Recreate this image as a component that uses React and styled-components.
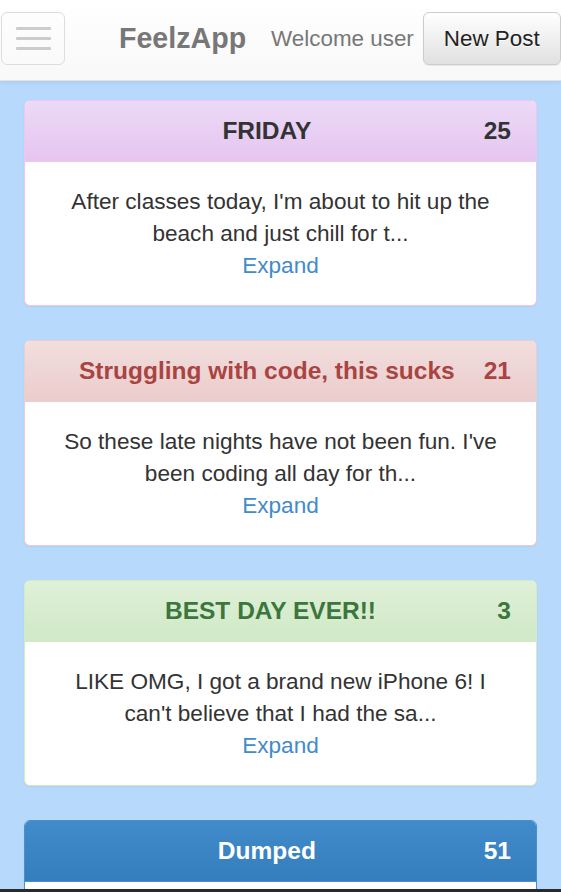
import styled, { createGlobalStyle } from "styled-components";

const GlobalStyle = createGlobalStyle`
  html, body {
    margin: 0;
    padding: 0;
  }
  body {
    font-family: "Liberation Sans", Arial, Helvetica, sans-serif;
    color: #333333;
    background: #b6d9fc;
  }
  * {
    box-sizing: border-box;
  }
`;

const posts = [
  {
    id: 1,
    title: "FRIDAY",
    votes: 25,
    mood: "purple",
    text: "After classes today, I'm about to hit up the beach and just chill for t...",
  },
  {
    id: 2,
    title: "Struggling with code, this sucks",
    votes: 21,
    mood: "danger",
    text: "So these late nights have not been fun. I've been coding all day for th...",
  },
  {
    id: 3,
    title: "BEST DAY EVER!!",
    votes: 3,
    mood: "success",
    text: "LIKE OMG, I got a brand new iPhone 6! I can't believe that I had the sa...",
  },
  {
    id: 4,
    title: "Dumped",
    votes: 51,
    mood: "primary",
    text: "I can't believe she did that to me. We were together for so long and...",
  },
];

const moods = {
  purple: {
    top: "#ebdaf6",
    bottom: "#e6c5f0",
    border: "#efc6f1",
    color: "#333333",
  },
  danger: {
    top: "#f2dede",
    bottom: "#ebcccc",
    border: "#ebccd1",
    color: "#a94442",
  },
  success: {
    top: "#dff0d8",
    bottom: "#d0e9c6",
    border: "#d6e9c6",
    color: "#3c763d",
  },
  primary: {
    top: "#428bca",
    bottom: "#357ebd",
    border: "#4a90cf",
    color: "#ffffff",
  },
};

function Post(props) {
  const { title, votes, mood, text } = props.post;
  const m = moods[mood];
  return (
    <Panel $border={m.border}>
      <PanelHeading $top={m.top} $bottom={m.bottom} $border={m.border}>
        <Title $color={m.color}>{title}</Title>
        <Votes $color={m.color}>{votes}</Votes>
      </PanelHeading>
      <PanelBody>
        <p>{text}</p>
        <Expand href="#">Expand</Expand>
      </PanelBody>
    </Panel>
  );
}

export default function App() {
  return (
    <>
      <GlobalStyle />
      <Screen>
        <Navbar>
          <Toggle aria-label="menu">
            <Bar />
            <Bar />
            <Bar />
          </Toggle>
          <Brand>FeelzApp</Brand>
          <Welcome>Welcome user</Welcome>
          <NewPost>New Post</NewPost>
        </Navbar>
        <Feed>
          {posts.map((post) => (
            <Post key={post.id} post={post} />
          ))}
        </Feed>
        <WindowEdge />
      </Screen>
    </>
  );
}

const Screen = styled.div`
  height: 100vh;
  display: flex;
  flex-direction: column;
  overflow: hidden;
  background: #b6d9fc;
`;

const Navbar = styled.nav`
  flex: 0 0 auto;
  height: 81px;
  display: flex;
  align-items: flex-start;
  padding-top: 12px;
  padding-left: 1px;
  background: linear-gradient(to bottom, #ffffff 0%, #f8f8f8 100%);
  border-bottom: 1px solid #e2e2e2;
  box-shadow: 0 1px 5px rgba(0, 0, 0, 0.075);
  position: relative;
  z-index: 1;
`;

const Toggle = styled.button`
  width: 64px;
  height: 53px;
  margin: 0;
  padding: 0;
  border: 1px solid #dddddd;
  border-radius: 6px;
  background: transparent;
  display: flex;
  flex-direction: column;
  align-items: center;
  justify-content: center;
  gap: 7px;
`;

const Bar = styled.span`
  display: block;
  width: 35px;
  height: 3px;
  border-radius: 1px;
  background: #cccccc;
`;

const Brand = styled.div`
  margin-left: 54px;
  height: 53px;
  display: flex;
  align-items: center;
  font-size: 28.6px;
  font-weight: 700;
  color: #777777;
`;

const Welcome = styled.div`
  margin-left: 25px;
  height: 53px;
  display: flex;
  align-items: center;
  font-size: 22.4px;
  color: #777777;
`;

const NewPost = styled.button`
  margin-left: 9px;
  height: 53px;
  padding: 0 20px;
  font-family: "Liberation Sans", Arial, sans-serif;
  font-size: 22.4px;
  color: #222222;
  border: 1px solid #cccccc;
  border-radius: 6px;
  background: linear-gradient(to bottom, #ffffff 0%, #e0e0e0 100%);
  box-shadow: inset 0 1px 0 rgba(255, 255, 255, 0.15),
    0 1px 1px rgba(0, 0, 0, 0.075);
  text-shadow: 0 1px 0 #ffffff;
  white-space: nowrap;
`;

const Feed = styled.main`
  flex: 1 1 auto;
  min-height: 0;
  overflow: hidden;
  padding: 19px 24px 0;
  display: flex;
  flex-direction: column;
  gap: 34px;
`;

const Panel = styled.section`
  flex: 0 0 auto;
  background: #ffffff;
  border: 1px solid ${(props) => props.$border};
  border-radius: 6px;
  box-shadow: 0 1px 2px rgba(0, 0, 0, 0.05);
  overflow: hidden;
`;

const PanelHeading = styled.header`
  display: flex;
  align-items: center;
  padding: 16px 0 16px 25px;
  background: linear-gradient(
    to bottom,
    ${(props) => props.$top} 0%,
    ${(props) => props.$bottom} 100%
  );
  border-bottom: 1px solid ${(props) => props.$border};
`;

const Title = styled.h3`
  flex: 1;
  margin: 0;
  text-align: center;
  font-size: 24.5px;
  line-height: 28px;
  font-weight: 700;
  color: ${(props) => props.$color};
  white-space: nowrap;
`;

const Votes = styled.span`
  flex: 0 0 45px;
  padding-right: 25px;
  display: flex;
  justify-content: flex-end;
  font-size: 24.5px;
  line-height: 28px;
  font-weight: 700;
  color: ${(props) => props.$color};
  white-space: nowrap;
`;

const PanelBody = styled.div`
  padding: 24px 38px 23px;
  text-align: center;
  font-size: 22.6px;
  line-height: 32px;
  color: #333333;

  p {
    margin: 0;
  }
`;

const Expand = styled.a`
  display: block;
  color: #428bca;
  text-decoration: none;
`;

const WindowEdge = styled.div`
  flex: 0 0 3px;
  background: #2a2a2a;
`;
